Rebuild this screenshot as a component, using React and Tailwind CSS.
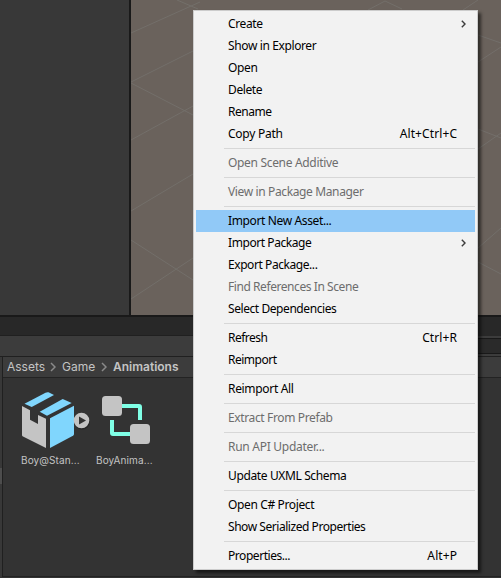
import React from "react";

const groups = [
  [
    { t: "Create", sub: true },
    { t: "Show in Explorer" },
    { t: "Open" },
    { t: "Delete" },
    { t: "Rename", s: "tracking-[-0.45px]" },
    { t: "Copy Path", s: "tracking-[-0.25px]", k: "Alt+Ctrl+C" },
  ],
  [{ t: "Open Scene Additive", s: "tracking-[-0.32px]", off: true }],
  [{ t: "View in Package Manager", s: "tracking-[-0.37px]", off: true }],
  [
    { t: "Import New Asset...", s: "tracking-[-0.37px]", active: true },
    { t: "Import Package", s: "tracking-[-0.43px]", sub: true },
    { t: "Export Package...", s: "tracking-[-0.43px]" },
    { t: "Find References In Scene", s: "tracking-[-0.43px]", off: true },
    { t: "Select Dependencies", s: "tracking-[-0.43px]" },
  ],
  [
    { t: "Refresh", s: "tracking-[-0.5px]", k: "Ctrl+R" },
    { t: "Reimport", s: "tracking-[-0.5px]" },
  ],
  [{ t: "Reimport All", s: "tracking-[-0.32px]" }],
  [{ t: "Extract From Prefab", s: "tracking-[-0.37px]", off: true }],
  [{ t: "Run API Updater...", s: "tracking-[-0.28px]", off: true }],
  [{ t: "Update UXML Schema", s: "tracking-[-0.37px]" }],
  [
    { t: "Open C# Project", s: "tracking-[-0.37px]" },
    { t: "Show Serialized Properties", s: "tracking-[-0.45px]" },
  ],
  [{ t: "Properties...", s: "tracking-[-0.45px]", k: "Alt+P" }],
];

function MenuItem({ item }) {
  return (
    <div
      className={`flex h-[22px] items-center pl-8 pr-[18px] text-[12px] leading-[22px] ${
        item.active ? "bg-[#91c9f7]" : ""
      } ${item.off ? "text-[#6d6d6d]" : "text-black"}`}
    >
      <span className={item.s || "tracking-[-0.38px]"}>{item.t}</span>
      {item.k && <span className="-mr-[0.1px] ml-auto tracking-[0.1px]">{item.k}</span>}
      {item.sub && (
        <svg className="-mr-[9px] ml-auto" width="5" height="8" viewBox="0 0 5 8">
          <path d="M.8 .8 4 4 .8 7.2" fill="none" stroke="#3c3c3c" strokeWidth="1.4" />
        </svg>
      )}
    </div>
  );
}

function ContextMenu() {
  return (
    <div className="absolute left-[193px] top-[10px] h-[560px] w-[285px] whitespace-nowrap border border-[#cccccc] bg-[#f2f2f2] p-[2px] font-['Noto_Sans',sans-serif] shadow-[3px_3px_3px_rgba(0,0,0,0.55)]">
      {groups.map((g, i) => (
        <React.Fragment key={i}>
          {i > 0 && (
            <div className="flex h-[7px] items-center pl-7">
              <div className="h-px w-full bg-[#d7d7d7]" />
            </div>
          )}
          {g.map((item) => (
            <MenuItem key={item.t} item={item} />
          ))}
        </React.Fragment>
      ))}
    </div>
  );
}

function SceneGrid() {
  return (
    <svg className="block" width="370" height="315" viewBox="131 0 370 315" fill="none" stroke="#736f6a">
      <path d="M131 33 200 2M131 82 193 51M131 140 193 106M131 211 193 174M131 83 193 115M131 240 193 280M131 299 193 258M177 0 198 9" />
      <path d="M368 10 385 1 402 9M463 10 478 0M478 35 501 43M478 62 501 47M478 129 501 138M478 149 501 133M478 248 501 228M478 262 501 274" />
    </svg>
  );
}

function ModelIcon() {
  return (
    <svg className="block" width="72" height="60" viewBox="20 390 72 60">
      <g fill="#80d6fd">
        <path d="M24.5 403.7 31.7 407 54 395 48.5 392.3Q47 392 45.5 392.7Z" />
        <path d="M39.7 411.7 47 415.7 71.7 403 62.7 399Z" />
        <path d="M50 418.3 74 405.7V434Q74 435 73 435.7L50 448Z" />
      </g>
      <path d="M22 406 30 410.3V419.7L38 424V415L46 418.7V448L23 436.5Q22 436 22 435Z" fill="#c4c4c4" />
      <circle cx="82" cy="421.5" r="8" fill="#222" opacity=".7" />
      <circle cx="81.5" cy="420.5" r="7.8" fill="#c4c4c4" />
      <path d="M79 416.5 86 420.5 79 424.5Z" fill="#333" />
    </svg>
  );
}

function AnimatorIcon() {
  return (
    <svg className="block" width="50" height="60" viewBox="101 390 50 60">
      <path d="M122 406H139Q140 406 140 407V420M112 420V433Q112 434 113 434H130" fill="none" stroke="#80ffe6" strokeWidth="4" />
      <rect x="102" y="396" width="20" height="20" rx="3.5" fill="#c4c4c4" />
      <rect x="130" y="424" width="20" height="20" rx="3.5" fill="#c4c4c4" />
    </svg>
  );
}

function Crumb() {
  return (
    <svg width="6" height="10" viewBox="0 0 6 10">
      <path d="M1 1 5 5 1 9" fill="none" stroke="#8a8a8a" strokeWidth="1.5" />
    </svg>
  );
}

export default function App() {
  return (
    <div className="relative flex h-[578px] w-[501px] flex-col overflow-hidden bg-[#333333] font-['Inter',sans-serif] text-[#c4c4c4]">
      <div className="flex h-[315px]">
        <div className="w-[131px] border-r-2 border-[#191919] bg-[#383838]" />
        <div className="w-[370px] bg-[#6a625c]">
          <SceneGrid />
        </div>
      </div>
      <div className="h-[2px] bg-[#191919]" />
      <div className="flex h-[39px]">
        <div className="flex w-[300px] flex-col">
          <div className="h-[18px] bg-[#282828]" />
          <div className="h-px bg-[#202020]" />
          <div className="h-5 bg-[#3c3c3c]" />
        </div>
        <div className="flex flex-1 flex-col bg-[#3c3c3c]">
          <div className="h-[19px] bg-[#282828]" />
          <div className="mt-[2px] h-[16px] border-y border-[#191919] bg-[#2a2a2a]" />
        </div>
      </div>
      <div className="flex h-[221px] border-t border-[#202020]">
        <div className="w-[3px] border-r border-[#202020] bg-[#383838] pt-[111px]">
          <div className="h-4 bg-[#4d4d4d]" />
        </div>
        <div className="flex flex-1 flex-col">
          <div className="flex h-[21px] items-center border-b border-[#232323] bg-[#3c3c3c] pl-1 text-[12px]">
            <span className="w-[37px]">Assets</span>
            <span className="flex w-[18px] justify-center"><Crumb /></span>
            <span className="w-[33px]">Game</span>
            <span className="flex w-[18px] justify-center"><Crumb /></span>
            <span className="font-semibold">Animations</span>
          </div>
          <div className="flex flex-1 border-b border-[#232323] pl-[17px] pt-3 text-[10px] leading-[13px] tracking-[0.1px]">
            <div className="w-[75px]">
              <ModelIcon />
              <div className="mt-1 pl-[1px]">Boy@Stan...</div>
            </div>
            <div className="pl-[6px]">
              <AnimatorIcon />
              <div className="-ml-[5px] mt-1">BoyAnima...</div>
            </div>
          </div>
        </div>
      </div>
      <ContextMenu />
    </div>
  );
}
